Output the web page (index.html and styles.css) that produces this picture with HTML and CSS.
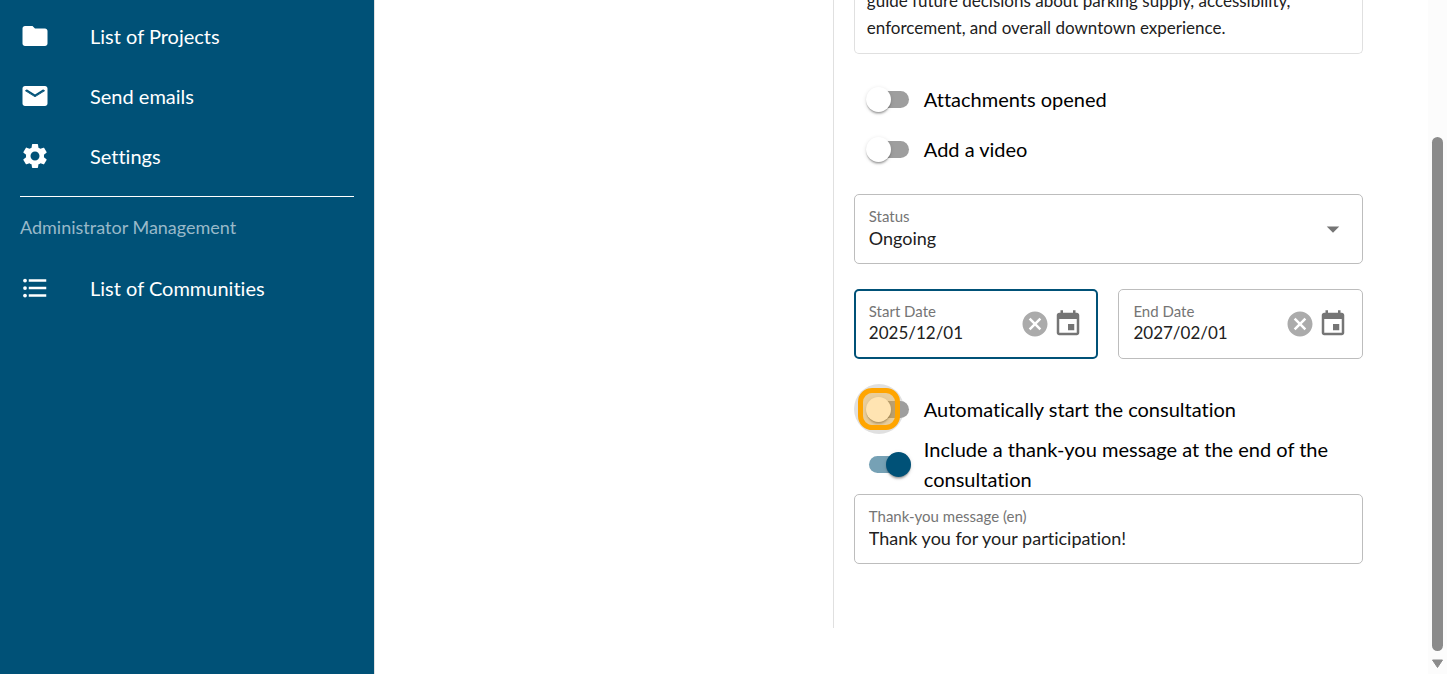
FILE: index.html
```
<!DOCTYPE html>
<html lang="en">
<head>
	<meta charset="UTF-8">
	<title>Consultation</title>
	<link rel="stylesheet" href="styles.css">
</head>
<body>
	<div class="page">
		<nav class="sidebar">
			<a class="item" href="#projects">
				<svg class="icon" viewBox="0 0 24 24"><path d="M10 4H4c-1.100 0-1.990.9-1.990 2L2 18c0 1.100.9 2 2 2h16c1.100 0 2-.9 2-2V8c0-1.100-.9-2-2-2h-8l-2-2z"/></svg>
				<span>List of Projects</span>
			</a>
			<a class="item" href="#emails">
				<svg class="icon" viewBox="0 0 24 24"><path d="M20 4H4c-1.100 0-2 .9-2 2v12c0 1.100.9 2 2 2h16c1.100 0 2-.9 2-2V6c0-1.100-.9-2-2-2zm-.4 4.250l-7.070 4.420c-.32.2-.74.2-1.060 0L4.400 8.250c-.25-.16-.4-.43-.4-.72V6.700l8 5 8-5v.83c0 .29-.15.56-.4.72z" fill-rule="evenodd"/><path d="M4 4.500h16v2.600l-8 5-8-5z"/><path d="M5 7.200l7 4.400 7-4.400" fill="none" stroke="#005177" stroke-width="1.300"/><path d="M4 8.600l8 5 8-5V15H4z"/></svg>
				<span>Send emails</span>
			</a>
			<a class="item" href="#settings">
				<svg class="icon" viewBox="0 0 24 24"><path d="M19.140 12.940c.04-.3.06-.61.06-.94 0-.32-.02-.64-.07-.94l2.030-1.580c.18-.14.23-.41.12-.61l-1.920-3.320c-.12-.22-.37-.29-.59-.22l-2.390.96c-.5-.38-1.030-.7-1.620-.94l-.36-2.540c-.04-.24-.24-.41-.48-.41h-3.840c-.24 0-.43.17-.47.41l-.36 2.540c-.59.24-1.130.57-1.620.94l-2.390-.96c-.22-.08-.47 0-.59.22L2.740 8.870c-.12.21-.08.47.12.61l2.030 1.580c-.05.3-.09.63-.09.94s.02.64.07.94l-2.030 1.580c-.18.14-.23.41-.12.61l1.920 3.320c.12.22.37.29.59.22l2.390-.96c.5.38 1.030.7 1.620.94l.36 2.540c.05.24.24.41.48.41h3.840c.24 0 .44-.17.47-.41l.36-2.540c.59-.24 1.130-.56 1.620-.94l2.390.96c.22.08.47 0 .59-.22l1.920-3.320c.12-.22.07-.47-.12-.61l-2.010-1.580zM12 15.600c-1.980 0-3.600-1.620-3.600-3.600s1.620-3.600 3.600-3.600 3.600 1.620 3.600 3.600-1.620 3.600-3.600 3.600z"/></svg>
				<span>Settings</span>
			</a>
			<h2 class="section">Administrator Management</h2>
			<a class="item" href="#communities">
				<svg class="icon" viewBox="0 0 24 24"><path d="M7 5h14v2H7zM7 11h14v2H7zM7 17h14v2H7z"/><circle cx="4" cy="6" r="1.500"/><circle cx="4" cy="12" r="1.500"/><circle cx="4" cy="18" r="1.500"/></svg>
				<span>List of Communities</span>
			</a>
		</nav>

		<main class="content">
			<div class="preview"></div>
			<form class="form">
				<div class="description">
					<p>guide future decisions about parking supply, accessibility, enforcement, and overall downtown experience.</p>
				</div>

				<div class="switches">
					<label class="switch-row"><input class="switch" type="checkbox"><span>Attachments opened</span></label>
					<label class="switch-row"><input class="switch" type="checkbox"><span>Add a video</span></label>
				</div>

				<div class="field">
					<div class="field-text">
						<label for="status">Status</label>
						<select id="status"><option>Ongoing</option></select>
					</div>
					<svg class="icon" viewBox="0 0 24 24"><path d="M7 10l5 5 5-5z"/></svg>
				</div>

				<div class="dates">
					<div class="field focused">
						<div class="field-text">
							<label for="start">Start Date</label>
							<input id="start" type="text" value="2025/12/01">
						</div>
						<button class="icon-btn clear" type="button" aria-label="Clear start date">
							<svg class="icon" viewBox="0 0 24 24"><path d="M12 2C6.470 2 2 6.470 2 12s4.470 10 10 10 10-4.470 10-10S17.530 2 12 2zm5 13.590L15.590 17 12 13.410 8.410 17 7 15.590 10.590 12 7 8.410 8.410 7 12 10.590 15.590 7 17 8.410 13.410 12 17 15.590z"/></svg>
						</button>
						<button class="icon-btn" type="button" aria-label="Choose start date">
							<svg class="icon" viewBox="0 0 24 24"><path d="M17 12h-5v5h5v-5zM16 1v2H8V1H6v2H5c-1.110 0-1.990.9-1.990 2L3 19c0 1.100.89 2 2 2h14c1.100 0 2-.9 2-2V5c0-1.100-.9-2-2-2h-1V1h-2zm3 18H5V8h14v11z"/></svg>
						</button>
					</div>
					<div class="field">
						<div class="field-text">
							<label for="end">End Date</label>
							<input id="end" type="text" value="2027/02/01">
						</div>
						<button class="icon-btn clear" type="button" aria-label="Clear end date">
							<svg class="icon" viewBox="0 0 24 24"><path d="M12 2C6.470 2 2 6.470 2 12s4.470 10 10 10 10-4.470 10-10S17.530 2 12 2zm5 13.590L15.590 17 12 13.410 8.410 17 7 15.590 10.590 12 7 8.410 8.410 7 12 10.590 15.590 7 17 8.410 13.410 12 17 15.590z"/></svg>
						</button>
						<button class="icon-btn" type="button" aria-label="Choose end date">
							<svg class="icon" viewBox="0 0 24 24"><path d="M17 12h-5v5h5v-5zM16 1v2H8V1H6v2H5c-1.110 0-1.990.9-1.990 2L3 19c0 1.100.89 2 2 2h14c1.100 0 2-.9 2-2V5c0-1.100-.9-2-2-2h-1V1h-2zm3 18H5V8h14v11z"/></svg>
						</button>
					</div>
				</div>

				<div>
					<label class="switch-row highlight"><input class="switch" type="checkbox"><span>Automatically start the consultation</span></label>
					<label class="switch-row"><input class="switch" type="checkbox" checked><span>Include a thank-you message at the end of the consultation</span></label>
					<div class="field">
						<div class="field-text">
							<label for="thanks">Thank-you message (en)</label>
							<input id="thanks" type="text" value="Thank you for your participation!">
						</div>
					</div>
				</div>
			</form>
		</main>

		<div class="scrollbar">
			<div class="thumb"></div>
			<svg class="arrow" viewBox="0 0 13 10"><path d="M1.500 1h10L6.500 8.500z"/></svg>
		</div>
	</div>
</body>
</html>
```
FILE: styles.css
```
*,
*::before,
*::after {
	box-sizing: border-box;
}
body {
	margin: 0;
	font-family: Lato, "Liberation Sans", sans-serif;
	font-size: 20px;
	font-variant-ligatures: none;
	line-height: 30px;
	color: #000;
	background-color: #fff;
}
.page {
	display: flex;
	height: 100vh;
	overflow: hidden;
}
.icon {
	display: block;
	flex: none;
	width: 30px;
	height: 30px;
	fill: currentColor;
}

/* sidebar */
.sidebar {
	flex: none;
	width: 375px;
	padding: 6px 20px;
	background-color: #005177;
	border-right: 1px solid #e0e0e0;
}
.item {
	display: flex;
	align-items: center;
	gap: 40px;
	height: 60px;
	color: #fff;
	text-decoration: none;
}
.section {
	margin: 10px 0 0;
	padding: 15px 0 16px;
	border-top: 1px solid #fff;
	font-size: 18px;
	font-weight: 400;
	color: #99b9c9;
}

/* content */
.content {
	flex: 1;
	display: grid;
	grid-template-columns: 10fr 13fr;
	align-items: start;
}
.form {
	display: flex;
	flex-direction: column;
	gap: 25px;
	padding: 0 65px 64px 20px;
	border-left: 1px solid #e0e0e0;
}
.description {
	display: flex;
	align-items: flex-end;
	height: 54px;
	padding: 0 12px 12px;
	border: 1px solid #e0e0e0;
	border-top: 0;
	border-radius: 0 0 5px 5px;
	font-size: 17px;
	line-height: 27px;
	color: #212121;
}
.description p {
	margin: 0;
}
.switches {
	margin: -5px 0;
}

/* switches */
.switch-row {
	position: relative;
	display: flex;
	align-items: center;
	gap: 13px;
	min-height: 50px;
	padding-left: 12px;
}
.switch {
	appearance: none;
	flex: none;
	display: grid;
	align-items: center;
	width: 45px;
	height: 25px;
	margin: 0;
}
.switch::before,
.switch::after {
	content: "";
	grid-area: 1 / 1;
}
.switch::before {
	width: 41px;
	height: 17px;
	margin-left: 2px;
	border-radius: 9px;
	background-color: #9e9e9e;
}
.switch::after {
	width: 25px;
	height: 25px;
	border-radius: 50%;
	background-color: #fff;
	box-shadow: 0 3px 2px -1px rgba(0,0,0,.2), 0 1px 1px rgba(0,0,0,.14), 0 1px 4px rgba(0,0,0,.12);
}
.switch:checked::before {
	margin-left: 3px;
	background-color: #76a1b5;
}
.switch:checked::after {
	justify-self: end;
	background-color: #005177;
}
/* ripple and focus ring over the thumb */
.highlight::before,
.highlight::after {
	content: "";
	position: absolute;
}
.highlight::before {
	left: 0;
	top: 0;
	width: 50px;
	height: 50px;
	border-radius: 50%;
	background-color: rgba(0,0,0,.12);
}
.highlight::after {
	left: 4px;
	top: 4px;
	z-index: 2;
	width: 42px;
	height: 42px;
	border: 5px solid #ffa500;
	border-radius: 14px;
	background-color: rgba(255,165,0,.3);
}
.highlight .switch {
	z-index: 1;
}

/* fields */
.field {
	display: flex;
	align-items: center;
	gap: 3px;
	height: 70px;
	padding: 0 14px;
	border: 1px solid #bdbdbd;
	border-radius: 5px;
	color: #757575;
}
.focused {
	padding: 0 13px;
	border: 2px solid #005177;
}
.field-text {
	flex: 1;
	min-width: 0;
	padding-bottom: 2px;
}
.field-text label {
	display: block;
	font-size: 15px;
	line-height: 20px;
}
.field-text input,
.field-text select {
	display: block;
	appearance: none;
	width: 100%;
	height: 24px;
	margin: 0;
	padding: 0;
	border: 0;
	outline: 0;
	background: none;
	font: inherit;
	font-size: 18px;
	line-height: 24px;
	color: #212121;
}
.dates {
	display: grid;
	grid-template-columns: 1fr 1fr;
	gap: 20px;
}
.dates input {
	font-size: 17px;
}
.icon-btn {
	padding: 0;
	border: 0;
	background: none;
	color: #757575;
}
.clear {
	color: #ababab;
}

/* scrollbar */
.scrollbar {
	flex: none;
	display: flex;
	flex-direction: column;
	align-items: center;
	gap: 8px;
	width: 19px;
	padding: 137px 0 5px;
	background-color: #fcfcfc;
}
.thumb {
	flex: 1;
	width: 11px;
	border-radius: 6px;
	background-color: #8b8b8b;
}
.arrow {
	width: 13px;
	height: 10px;
	fill: #8b8b8b;
	stroke: #8b8b8b;
	stroke-width: 1;
	stroke-linejoin: round;
}
```
